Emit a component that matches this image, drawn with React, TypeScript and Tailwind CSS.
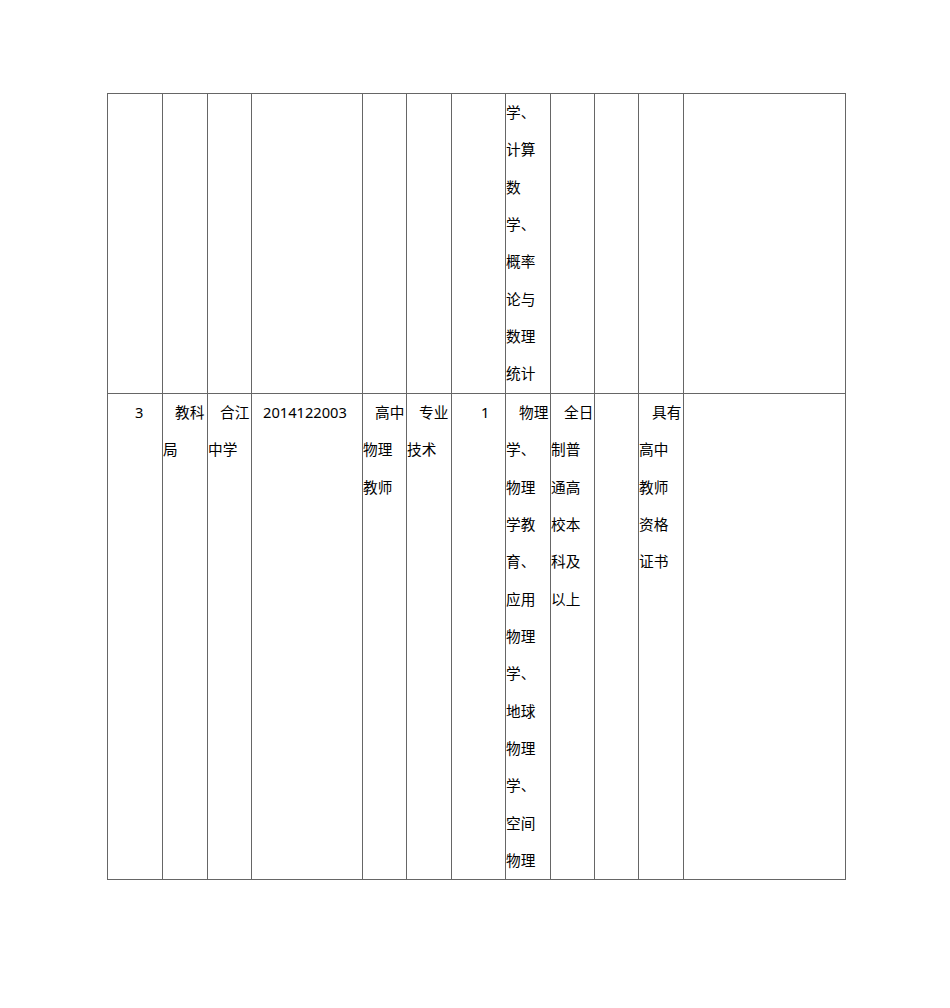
import React from "react";

type Cell = { lines: string[]; indent?: string };

const cols = "grid-cols-[55px_45px_44px_111px_44px_45px_54px_45px_44px_44px_45px_162px]";

const row1: Cell[] = [
  { lines: [] },
  { lines: [] },
  { lines: [] },
  { lines: [] },
  { lines: [] },
  { lines: [] },
  { lines: [] },
  { lines: ["学、", "计算", "数", "学、", "概率", "论与", "数理", "统计"] },
  { lines: [] },
  { lines: [] },
  { lines: [] },
  { lines: [] },
];

const row2: Cell[] = [
  { lines: ["3"], indent: "indent-[27px]" },
  { lines: ["教科", "局"], indent: "indent-[12px]" },
  { lines: ["合江", "中学"], indent: "indent-[12px]" },
  { lines: ["2014122003"], indent: "indent-[11px]" },
  { lines: ["高中", "物理", "教师"], indent: "indent-[12px]" },
  { lines: ["专业", "技术"], indent: "indent-[12px]" },
  { lines: ["1"], indent: "indent-[29px]" },
  {
    lines: ["物理", "学、", "物理", "学教", "育、", "应用", "物理", "学、", "地球", "物理", "学、", "空间", "物理"],
    indent: "indent-[13px]",
  },
  { lines: ["全日", "制普", "通高", "校本", "科及", "以上"], indent: "indent-[13px]" },
  { lines: [] },
  { lines: ["具有", "高中", "教师", "资格", "证书"], indent: "indent-[13px]" },
  { lines: [] },
];

const CellBox = ({ cell, height }: { cell: Cell; height: string }) => (
  <div className={`${height} border-l border-t border-[#666] overflow-hidden`}>
    {cell.lines.map((line, i) => (
      <div
        key={i}
        className={`h-[37.33px] leading-[37.33px] whitespace-nowrap ${i === 0 && cell.indent ? cell.indent : ""}`}
      >
        {line}
      </div>
    ))}
  </div>
);

export default function App() {
  return (
    <div
      className="min-h-screen bg-white pt-[93px] pl-[107px] text-black text-[14.67px]"
      style={{ fontFamily: '"Noto Sans", "Noto Sans CJK SC", sans-serif' }}
    >
      <div className={`grid ${cols} w-[739px] border-r border-b border-[#666]`}>
        {row1.map((c, i) => (
          <CellBox key={`a${i}`} cell={c} height="h-[300px]" />
        ))}
        {row2.map((c, i) => (
          <CellBox key={`b${i}`} cell={c} height="h-[486px]" />
        ))}
      </div>
    </div>
  );
}
